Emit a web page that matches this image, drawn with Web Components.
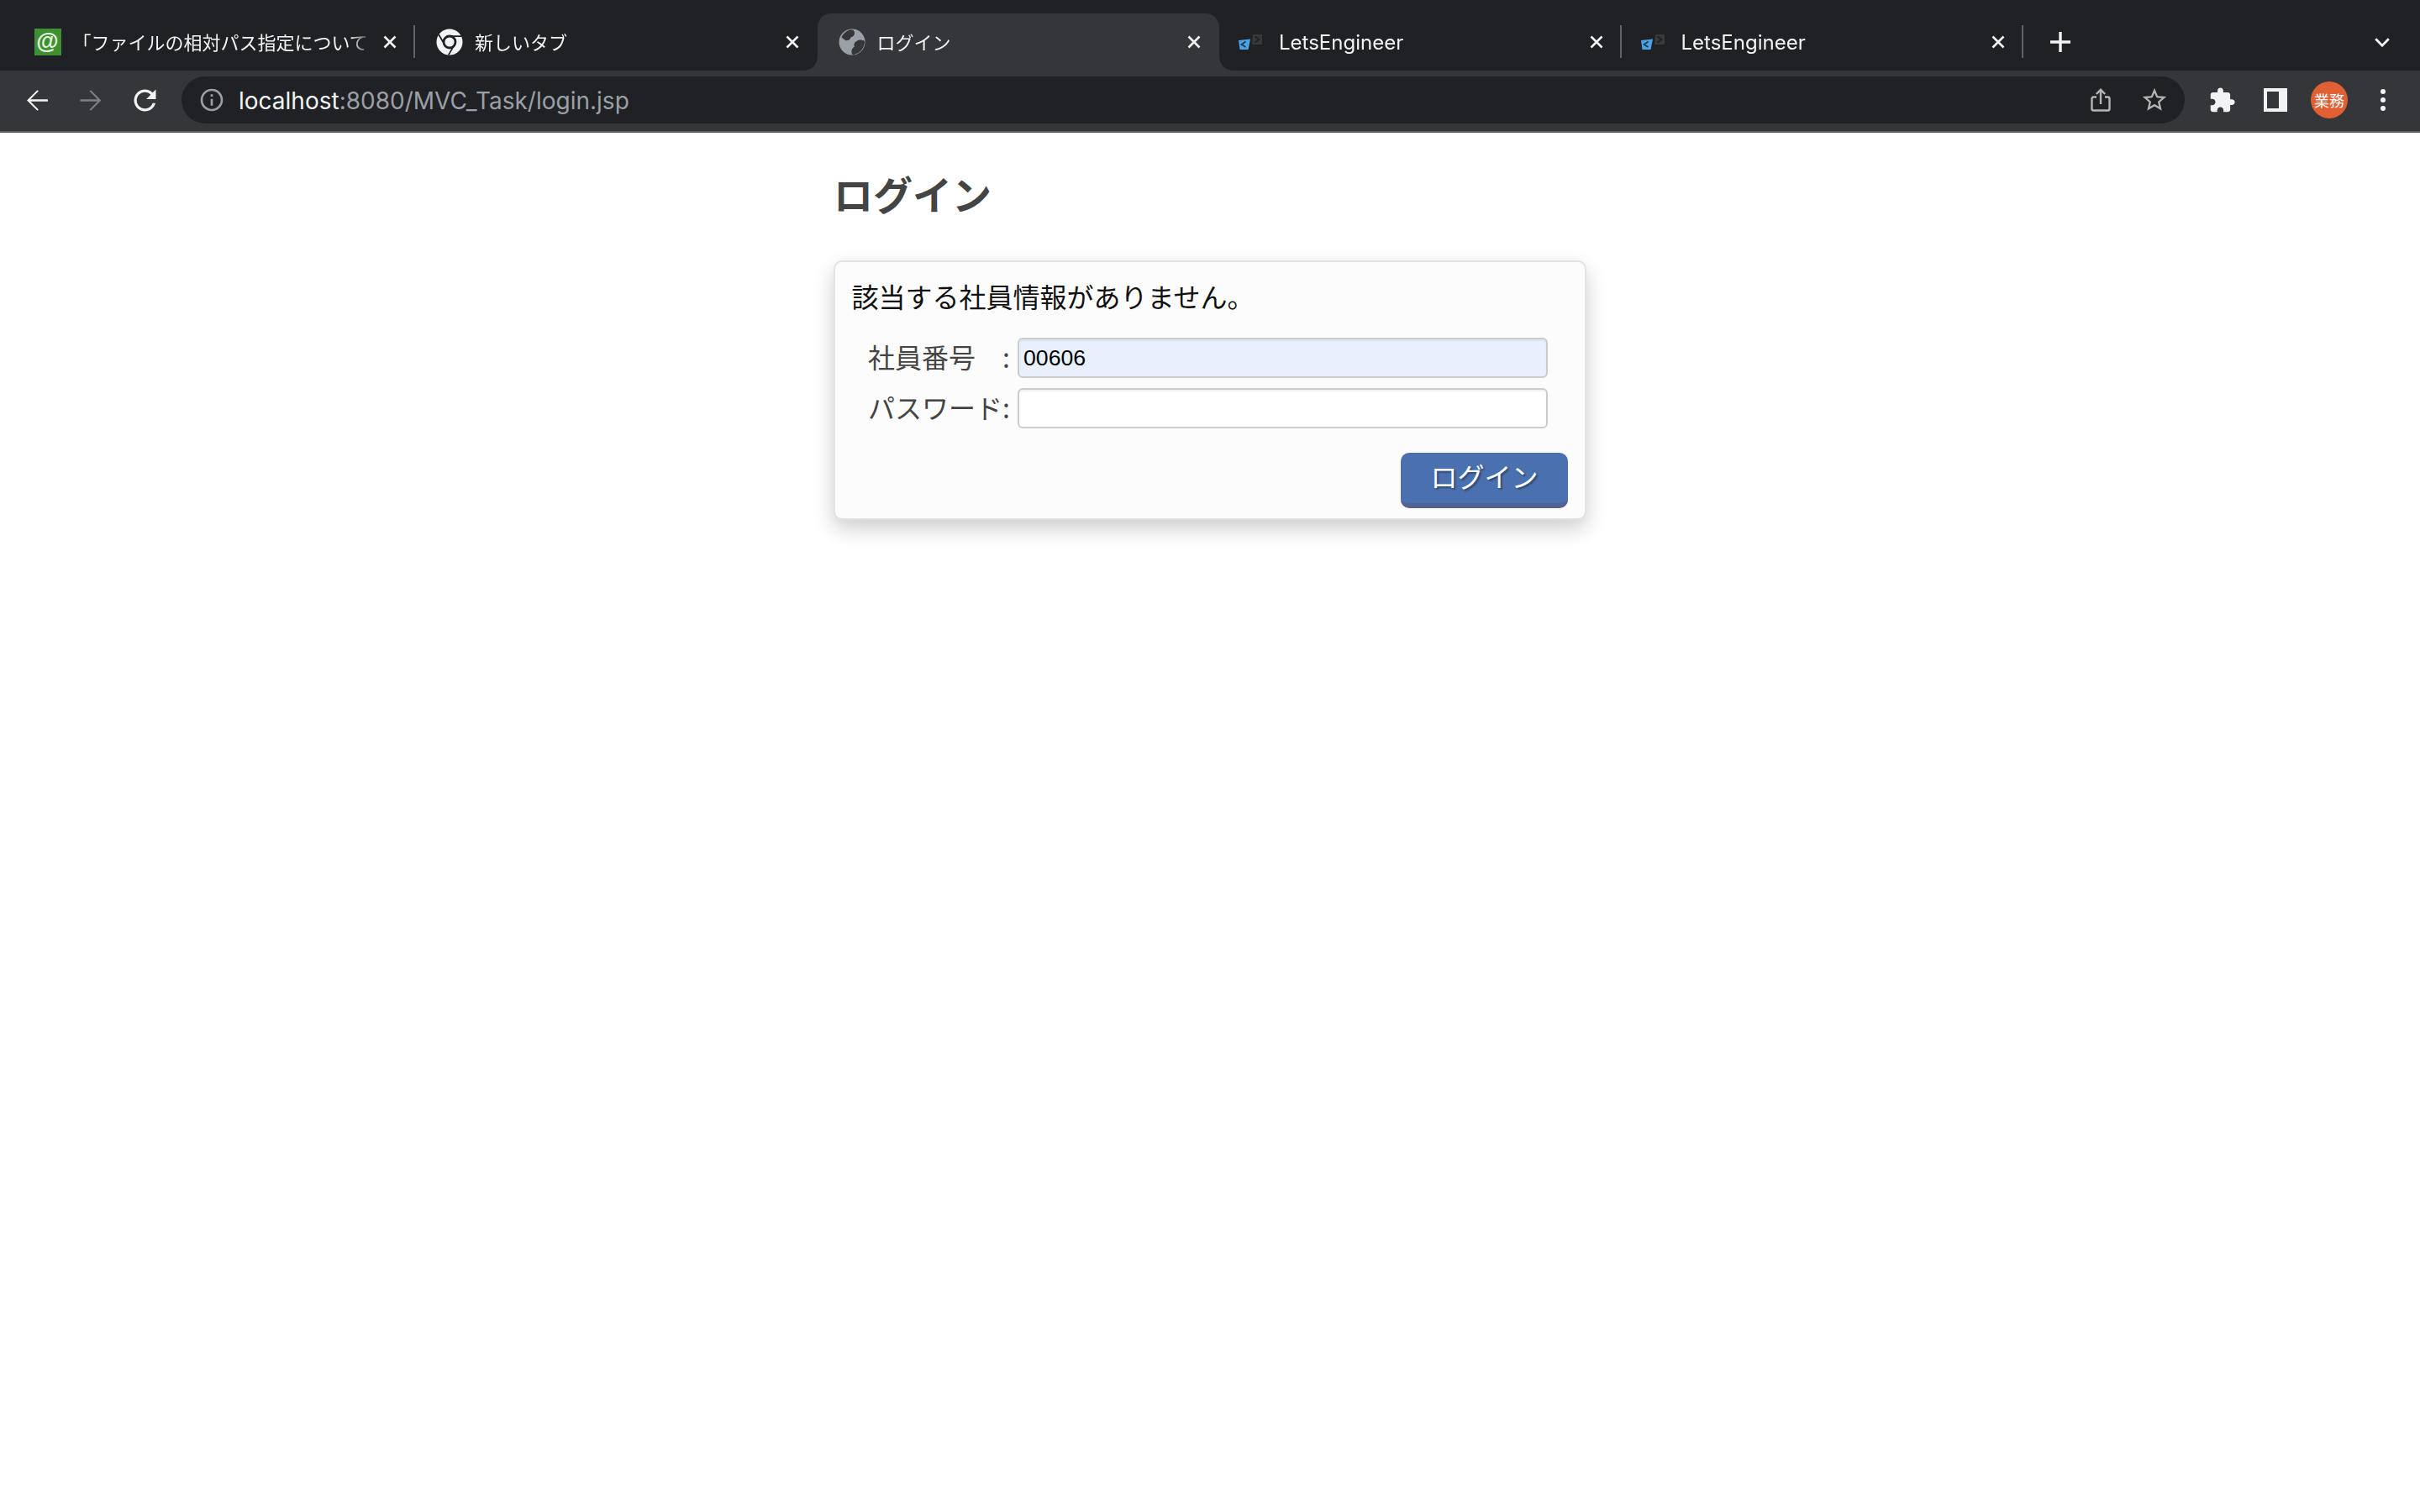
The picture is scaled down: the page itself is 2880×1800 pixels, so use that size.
<!DOCTYPE html>
<html lang="ja">
<head>
<meta charset="utf-8">
<title>ログイン</title>
<style>
  html, body { margin: 0; background: #fff; }
  body { min-height: 100vh; font-family: "Noto Sans CJK JP", "Liberation Sans", sans-serif; }
  browser-tab svg, tool-button svg { display: block; overflow: visible; }
</style>
</head>
<body>

<tab-strip>
  <browser-tab separator>
    <span slot="icon" class="mail">@</span>
    「ファイルの相対パス指定について
  </browser-tab>
  <browser-tab>
    <svg slot="icon" width="32" height="32" viewBox="0 0 32 32">
      <circle cx="16" cy="16" r="15.5" fill="#f1f3f4"/>
      <path d="M16 9.2H30M10.2 19.4 3.2 7.2M21.8 19.4 14.8 31.4" stroke="#202124" stroke-width="1.8" fill="none"/>
      <circle cx="16" cy="16" r="8.4" fill="#202124"/>
      <circle cx="16" cy="16" r="5.6" fill="#f1f3f4"/>
    </svg>
    新しいタブ
  </browser-tab>
  <browser-tab active>
    <svg slot="icon" width="32" height="32" viewBox="0 0 32 32">
      <circle cx="16" cy="16" r="15.5" fill="#9aa0a6"/>
      <path d="M13 1.5C9 3 5 6.500 3.500 10.500L8 14C11 15 14 13 14.500 10.500C17 10 19 8 19 5.500 19 3.800 18 2.500 17 1.500ZM31 15C28 13 24 13 21.500 15 19 16.500 17.500 18.500 19 21.500 17 23 15 25 15.500 28 15.800 29.500 16 30.500 16.500 31 24 31 31 24 31 15Z" fill="#35363a"/>
    </svg>
    ログイン
  </browser-tab>
  <browser-tab separator latin>
    <svg slot="icon" width="32" height="32" viewBox="0 0 32 32">
      <path d="M-2 14 12 12.500 9.500 25-.5 25Z" fill="#4ba3e3"/>
      <path d="M6.500 15.500 1.500 19 6.500 22" stroke="#1c3a52" stroke-width="1.800" fill="none"/>
      <path d="M15 7H26V19H14Z" fill="#38393b"/>
      <path d="M17.500 9.500 22.500 13 17.500 16.500" stroke="#202124" stroke-width="1.800" fill="none"/>
    </svg>
    LetsEngineer
  </browser-tab>
  <browser-tab separator latin>
    <svg slot="icon" width="32" height="32" viewBox="0 0 32 32">
      <path d="M-2 14 12 12.500 9.500 25-.5 25Z" fill="#4ba3e3"/>
      <path d="M6.500 15.500 1.500 19 6.500 22" stroke="#1c3a52" stroke-width="1.800" fill="none"/>
      <path d="M15 7H26V19H14Z" fill="#38393b"/>
      <path d="M17.500 9.500 22.500 13 17.500 16.500" stroke="#202124" stroke-width="1.800" fill="none"/>
    </svg>
    LetsEngineer
  </browser-tab>
</tab-strip>

<nav-toolbar>
  <tool-button slot="left">
    <svg width="39" height="39" viewBox="0.35 0 24 24" fill="#f1f3f4"><path d="M20 11.200H7.300l5.900-5.900L12.300 4.400 4.700 12l7.600 7.600.9-.9-5.900-5.900H20z"/></svg>
  </tool-button>
  <tool-button slot="left">
    <svg width="39" height="39" viewBox="0 0 24 24" fill="#808185"><path d="M4 11.200h12.700l-5.900-5.900.9-.9 7.600 7.600-7.600 7.600-.9-.9 5.900-5.900H4z"/></svg>
  </tool-button>
  <tool-button slot="left">
    <svg width="39" height="39" viewBox="0 0 24 24" fill="#f1f3f4"><path d="M17.650 6.350C16.200 4.900 14.210 4 12 4c-4.420 0-7.990 3.580-7.990 8s3.570 8 7.990 8c3.730 0 6.840-2.550 7.730-6h-2.080c-.82 2.330-3.040 4-5.650 4-3.310 0-6-2.690-6-6s2.690-6 6-6c1.660 0 3.140.69 4.220 1.780L13 11h7V4l-2.350 2.350z"/></svg>
  </tool-button>

  <svg slot="info" width="32" height="32" viewBox="0 0 24 24" fill="#9aa0a6"><path d="M11 7h2v2h-2zm0 4h2v6h-2zm1-9C6.480 2 2 6.480 2 12s4.480 10 10 10 10-4.480 10-10S17.520 2 12 2zm0 18c-4.410 0-8-3.590-8-8s3.590-8 8-8 8 3.590 8 8-3.590 8-8 8z"/></svg>
  <span slot="host">localhost</span>
  <span slot="path">:8080/MVC_Task/login.jsp</span>

  <tool-button slot="omni">
    <svg width="24" height="28" viewBox="0 0 24 28" fill="none" stroke="#b4b5b7" stroke-width="2.400"><path d="M7 10.500H3.500a2 2 0 0 0-2 2V24.500a2 2 0 0 0 2 2H20.500a2 2 0 0 0 2-2V12.500a2 2 0 0 0-2-2H17M12 19V2M6.800 7 12 1.800 17.200 7"/></svg>
  </tool-button>
  <tool-button slot="omni">
    <svg width="34" height="34" viewBox="0 0 24 24" fill="#b4b5b7"><path d="M22 9.240l-7.190-.62L12 2 9.190 8.630 2 9.240l5.460 4.730L5.820 21 12 17.270 18.180 21l-1.630-7.030L22 9.240zM12 15.400l-3.760 2.270 1-4.280-3.320-2.880 4.380-.38L12 6.100l1.710 4.040 4.380.38-3.320 2.880 1 4.280L12 15.400z"/></svg>
  </tool-button>

  <tool-button slot="right">
    <svg width="33" height="33" viewBox="0 0 24 24" fill="#f1f3f4"><path d="M20.500 11H19V7c0-1.100-.9-2-2-2h-4V3.500C13 2.120 11.880 1 10.500 1S8 2.120 8 3.500V5H4c-1.100 0-1.990.9-1.990 2v3.800H3.500c1.490 0 2.700 1.210 2.700 2.700s-1.210 2.700-2.700 2.700H2V20c0 1.100.9 2 2 2h3.800v-1.500c0-1.490 1.210-2.700 2.700-2.700 1.490 0 2.700 1.210 2.700 2.700V22H17c1.100 0 2-.9 2-2v-4h1.500c1.380 0 2.500-1.120 2.500-2.500S21.880 11 20.500 11z"/></svg>
  </tool-button>
  <tool-button slot="right">
    <svg width="28" height="28" viewBox="0 0 28 28"><path d="M0 0H28V28H0Z" fill="#f1f3f4"/><path d="M4 4H18V24H4Z" fill="#35363a"/></svg>
  </tool-button>
  <tool-button slot="right"><user-badge>業務</user-badge></tool-button>
  <tool-button slot="right">
    <svg width="8" height="28" viewBox="0 0 8 28" fill="#f1f3f4"><circle cx="4" cy="4" r="3"/><circle cx="4" cy="14" r="3"/><circle cx="4" cy="24" r="3"/></svg>
  </tool-button>
</nav-toolbar>

<login-page>
  <span slot="title">ログイン</span>
  <span slot="message">該当する社員情報がありません。</span>
  <login-field label="社員番号　:" filled>00606</login-field>
  <login-field label="パスワード:"></login-field>
  <span slot="submit">ログイン</span>
</login-page>

<script>
const CJK = `"Noto Sans CJK JP", "Liberation Sans", sans-serif`;

// one tab of the strip, title and favicon come in through slots
class BrowserTab extends HTMLElement {
  constructor() {
    super();
    this.attachShadow({ mode: "open" });
  }

  getTemplate() {
    const template = document.createElement("template");
    template.innerHTML = `
      ${this.getStyles()}
      <div class="tab">
        <div class="icon"><slot name="icon"></slot></div>
        <div class="title"><slot></slot></div>
        <svg class="close" width="16" height="16" viewBox="0 0 16 16"><path d="M1.500 1.500 14.500 14.500M14.500 1.500 1.500 14.500" stroke="#f1f3f4" stroke-width="2.600"/></svg>
      </div>
    `;
    return template;
  }

  getStyles() {
    return `
      <style>
        :host {
          display: block;
          flex: 0 0 478.5px;
          min-width: 0;
          height: 68px;
          position: relative;
          font: 22px "Noto Sans CJK JP", sans-serif;
          color: #f1f3f4;
        }
        :host([latin]) { font: 24px "Inter", sans-serif; }
        .tab {
          display: flex;
          align-items: center;
          height: 100%;
          padding: 0 22px 0 25px;
          box-sizing: border-box;
        }
        .icon { flex: 0 0 32px; height: 32px; margin-right: 14px; }
        .title {
          flex: 1;
          min-width: 0;
          white-space: nowrap;
          overflow: hidden;
          padding-bottom: 2px;
          -webkit-mask-image: linear-gradient(to right, #000 calc(100% - 26px), transparent calc(100% - 2px));
        }
        :host([latin]) .title { padding-bottom: 0; }
        .close { flex: none; margin-left: 12px; }
        ::slotted(.mail) {
          display: block;
          width: 32px;
          height: 32px;
          background: #3f9030;
          color: #e8f3e4;
          font: 700 27px/30px "Liberation Sans", sans-serif;
          text-align: center;
        }
        :host([active]) {
          background: #35363a;
          border-radius: 16px 16px 0 0;
        }
        :host([active])::before, :host([active])::after {
          content: "";
          position: absolute;
          bottom: 0;
          width: 16px;
          height: 16px;
        }
        :host([active])::before {
          left: -16px;
          background: radial-gradient(circle at 0 0, transparent 15.500px, #35363a 16px);
        }
        :host([active])::after {
          right: -16px;
          background: radial-gradient(circle at 100% 0, transparent 15.500px, #35363a 16px);
        }
        :host([separator]) .tab::after {
          content: "";
          position: absolute;
          right: 0;
          top: 14px;
          width: 2px;
          height: 39px;
          background: #5f6368;
        }
      </style>
    `;
  }

  render() {
    this.shadowRoot.appendChild(this.getTemplate().content.cloneNode(true));
  }

  connectedCallback() {
    if (!this.shadowRoot.firstChild) this.render();
  }
}

class TabStrip extends HTMLElement {
  constructor() {
    super();
    this.attachShadow({ mode: "open" });
    this.shadowRoot.innerHTML = `
      <style>
        :host {
          display: flex;
          align-items: flex-end;
          height: 84px;
          padding-left: 15.500px;
          box-sizing: border-box;
          background: #202124;
        }
        .plus { flex: none; margin: 0 0 22px 32px; }
        .more { flex: none; margin: 0 36px 28px auto; }
      </style>
      <slot></slot>
      <svg class="plus" width="24" height="24" viewBox="0 0 24 24"><path d="M12 0V24M0 12H24" stroke="#f1f3f4" stroke-width="3.400"/></svg>
      <svg class="more" width="18" height="11" viewBox="0 0 18 11" fill="none"><path d="M1.200 1.200 9 9.200 16.800 1.200" stroke="#f1f3f4" stroke-width="2.800"/></svg>
    `;
  }
}

// 64px wide hit area that centers whatever icon it gets
class ToolButton extends HTMLElement {
  constructor() {
    super();
    this.attachShadow({ mode: "open" });
    this.shadowRoot.innerHTML = `
      <style>
        :host {
          display: flex;
          align-items: center;
          justify-content: center;
          flex: 0 0 64px;
          height: 56px;
        }
      </style>
      <slot></slot>
    `;
  }
}

class UserBadge extends HTMLElement {
  constructor() {
    super();
    this.attachShadow({ mode: "open" });
    this.shadowRoot.innerHTML = `
      <style>
        :host {
          display: flex;
          align-items: center;
          justify-content: center;
          width: 44px;
          height: 44px;
          border-radius: 50%;
          background: #e05f33;
          color: #fff;
          font: 18px ${CJK};
        }
      </style>
      <slot></slot>
    `;
  }
}

class NavToolbar extends HTMLElement {
  constructor() {
    super();
    this.attachShadow({ mode: "open" });
    this.shadowRoot.innerHTML = `
      <style>
        :host {
          display: flex;
          align-items: center;
          height: 74px;
          padding: 0 12px 2px;
          box-sizing: border-box;
          background: #35363a;
          border-bottom: 2px solid #5b5c60;
        }
        .group { display: flex; align-items: center; }
        .omnibox {
          flex: 1;
          min-width: 0;
          display: flex;
          align-items: center;
          height: 56px;
          margin: 0 12px;
          padding: 0 4px 0 20px;
          border-radius: 28px;
          background: #202124;
          font: 28px "Inter", "Liberation Sans", sans-serif;
        }
        .url { flex: 1; margin-left: 16px; padding-top: 2px; white-space: nowrap; }
        ::slotted([slot="host"]) { color: #f1f3f4; }
        ::slotted([slot="path"]) { color: #9aa0a6; }
        ::slotted([slot="info"]) { display: block; flex: none; }
      </style>
      <div class="group"><slot name="left"></slot></div>
      <div class="omnibox">
        <slot name="info"></slot>
        <div class="url"><slot name="host"></slot><slot name="path"></slot></div>
        <div class="group"><slot name="omni"></slot></div>
      </div>
      <div class="group"><slot name="right"></slot></div>
    `;
  }
}

class LoginField extends HTMLElement {
  constructor() {
    super();
    this.attachShadow({ mode: "open" });
  }

  connectedCallback() {
    this.shadowRoot.innerHTML = `
      <style>
        :host {
          display: flex;
          align-items: center;
          height: 48px;
          padding-left: 19.500px;
          color: #444;
        }
        .label { flex: 0 0 178px; white-space: nowrap; font: 32px/48px ${CJK}; margin-top: -5px; }
        .box {
          width: 631px;
          height: 48px;
          box-sizing: border-box;
          padding: 0 5px;
          border: 2px solid #ccc;
          border-radius: 6px;
          box-shadow: inset 0 2px 2px rgba(0,0,0,.06);
          background: #fff;
          color: #000;
          font: 26.670px/44px "Liberation Sans", sans-serif;
        }
        :host([filled]) .box { background: #e8f0fe; }
      </style>
      <span class="label">${this.getAttribute("label")}</span>
      <div class="box" role="textbox"><slot></slot></div>
    `;
  }
}

class LoginPage extends HTMLElement {
  constructor() {
    super();
    this.attachShadow({ mode: "open" });
    this.shadowRoot.innerHTML = `
      <style>
        :host {
          display: block;
          width: 896px;
          margin: 0 auto;
          padding-bottom: 60px;
          font-family: ${CJK};
        }
        h1 {
          margin: 36px 0 44px;
          font-size: 47px;
          line-height: 72px;
          font-weight: 700;
          color: #444;
        }
        .card {
          box-sizing: border-box;
          height: 309px;
          padding: 18px 20px 0 19.500px;
          border: 2px solid #e2e2e2;
          border-radius: 10px;
          background: #fcfcfc;
          box-shadow: 0 10px 24px rgba(0,0,0,.2);
        }
        .message { font-size: 32px; line-height: 44px; color: #111; margin-bottom: 28px; }
        .fields { display: flex; flex-direction: column; gap: 12px; }
        .actions { display: flex; justify-content: flex-end; margin-top: 29px; }
        button {
          width: 199px;
          height: 66px;
          padding: 0 0 6px;
          border: 0;
          border-bottom: 6px solid #556291;
          border-radius: 10px;
          background: #4a70b0;
          color: #fff;
          font: 32px ${CJK};
          text-shadow: 2px 2px 2px rgba(0,0,0,.35);
        }
      </style>
      <h1><slot name="title"></slot></h1>
      <section class="card">
        <div class="message"><slot name="message"></slot></div>
        <div class="fields"><slot></slot></div>
        <div class="actions"><button type="button"><slot name="submit"></slot></button></div>
      </section>
    `;
  }
}

customElements.define("browser-tab", BrowserTab);
customElements.define("tab-strip", TabStrip);
customElements.define("tool-button", ToolButton);
customElements.define("user-badge", UserBadge);
customElements.define("nav-toolbar", NavToolbar);
customElements.define("login-field", LoginField);
customElements.define("login-page", LoginPage);
</script>
</body>
</html>
